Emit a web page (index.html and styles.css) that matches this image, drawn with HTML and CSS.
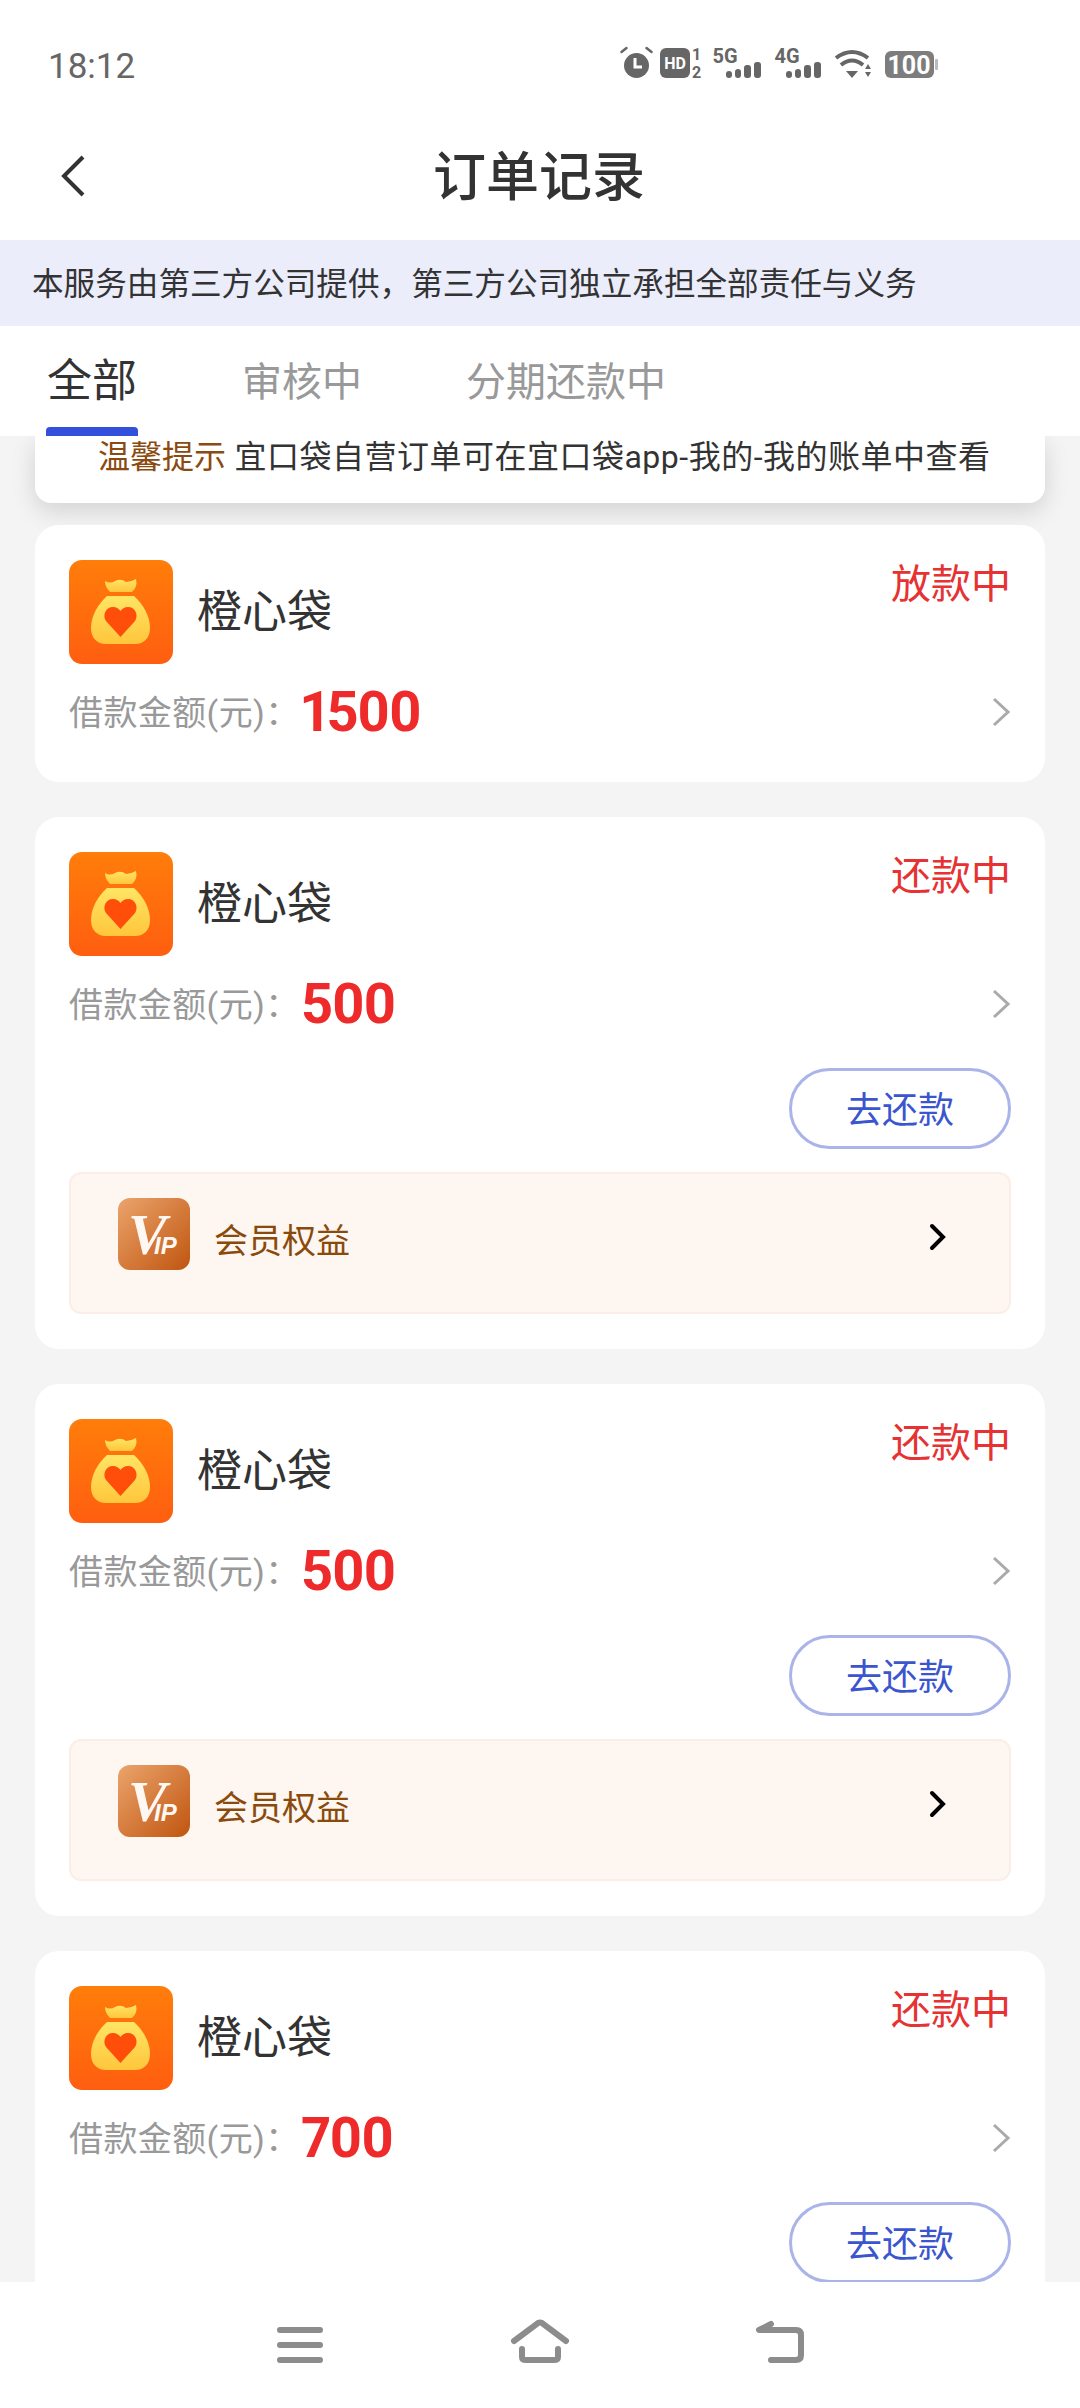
FILE: index.html
```html
<!DOCTYPE html>
<html lang="zh-CN">
<head>
    <meta charset="UTF-8">
    <meta name="viewport" content="width=device-width, initial-scale=1.0">
    <title>订单记录</title>
    <link rel="stylesheet" href="styles.css">
</head>
<body>
    <!-- shared icons -->
    <svg class="defs" width="0" height="0">
        <defs>
            <linearGradient id="logoBg" x1="0" y1="0" x2="0" y2="1">
                <stop offset="0" stop-color="#ff7d0a"/>
                <stop offset="1" stop-color="#ff5e10"/>
            </linearGradient>
            <linearGradient id="bagFill" x1="0" y1="0" x2="0" y2="1">
                <stop offset="0" stop-color="#ffe564"/>
                <stop offset="1" stop-color="#ffc63c"/>
            </linearGradient>
            <linearGradient id="vipBg" x1="0" y1="0" x2="1" y2="1">
                <stop offset="0" stop-color="#eba46c"/>
                <stop offset="1" stop-color="#c05510"/>
            </linearGradient>
            <symbol id="logo" viewBox="0 0 104 104">
                <rect width="104" height="104" rx="13" fill="url(#logoBg)"/>
                <path d="M36 21 Q41 24 46 21 Q52 18 57 22 Q62 22 67 19 Q69 27 63 32 H41 Q36 27 36 21Z" fill="url(#bagFill)"/>
                <path d="M38 36 H65 C74 44 81 56 81 68 C81 78 75 84 66 84 H37 C28 84 22 78 22 68 C22 56 29 44 38 36Z" fill="url(#bagFill)"/>
                <path d="M51.5 77 L37 61 C33 55 37 47 44 47 C47.5 47 50 49 51.5 51 C53 49 55.5 47 59 47 C66 47 70 55 66 61Z" fill="#ff4d0a"/>
            </symbol>
            <symbol id="vip" viewBox="0 0 72 72">
                <rect width="72" height="72" rx="12" fill="url(#vipBg)"/>
                <text x="10" y="56" class="vip-v">V</text>
                <text x="36" y="56" class="vip-ip">IP</text>
            </symbol>
        </defs>
    </svg>

    <div class="status-bar">
        <span class="time">18:12</span>
        <svg class="status-icons" viewBox="0 0 340 40" width="340" height="40">
            <path d="M3.5 7 L8.5 3 M28.5 3 L33.5 7" stroke="#666" stroke-width="2.5" stroke-linecap="round" fill="none"/>
            <circle cx="18.5" cy="20.5" r="12.5" fill="#666"/>
            <path d="M17 13 V22 H24" stroke="#fff" stroke-width="3" fill="none"/>
            <rect x="42" y="3" width="30" height="30" rx="6" fill="#666"/>
            <text x="57" y="24" class="ic-hd">HD</text>
            <text x="74" y="15" class="ic-sim">1</text>
            <text x="74" y="33" class="ic-sim">2</text>
            <text x="107" y="18" class="ic-net">5G</text>
            <rect x="108" y="26" width="6" height="7" rx="3" fill="#666"/>
            <rect x="117" y="24" width="6" height="9" rx="3" fill="#666"/>
            <rect x="126" y="20" width="7" height="13" rx="3" fill="#666"/>
            <rect x="136" y="17" width="7" height="16" rx="3" fill="#666"/>
            <text x="169" y="18" class="ic-net">4G</text>
            <rect x="168" y="26" width="6" height="7" rx="3" fill="#666"/>
            <rect x="177" y="24" width="6" height="9" rx="3" fill="#666"/>
            <rect x="186" y="20" width="7" height="13" rx="3" fill="#666"/>
            <rect x="196" y="17" width="7" height="16" rx="3" fill="#666"/>
            <path d="M218 13 Q234 1 250 13 M223 20 Q234 11 245 20" stroke="#666" stroke-width="4" fill="none"/>
            <path d="M228 26 H240 L234 33Z M247 24 H253 L250 19Z M247 27 H253 L250 32Z" fill="#666"/>
            <rect x="267" y="6" width="49" height="27" rx="6" fill="#7d7d7d"/>
            <rect x="317" y="14" width="3" height="11" rx="1" fill="#bbb"/>
            <text x="291" y="29" class="ic-batt">100</text>
        </svg>
    </div>

    <div class="nav-bar">
        <svg class="nav-back" viewBox="0 0 30 44" width="30" height="44">
            <path d="M25 3 L6 22 L25 41" fill="none" stroke="#333" stroke-width="4"/>
        </svg>
        <h1 class="nav-title">订单记录</h1>
    </div>

    <div class="notice">本服务由第三方公司提供，第三方公司独立承担全部责任与义务</div>

    <div class="tabs">
        <div class="tab active"><span>全部</span><i class="tab-line"></i></div>
        <div class="tab"><span>审核中</span></div>
        <div class="tab"><span>分期还款中</span></div>
    </div>

    <div class="list">
        <div class="tip"><b>温馨提示</b> 宜口袋自营订单可在宜口袋app-我的-我的账单中查看</div>

        <div class="card">
            <div class="card-head">
                <svg class="logo"><use href="#logo"/></svg>
                <span class="name">橙心袋</span>
                <span class="state">放款中</span>
            </div>
            <div class="amount-row">
                <span class="label">借款金额(元)：</span>
                <span class="amount">1500</span>
                <svg class="arrow" viewBox="0 0 20 30" width="20" height="30"><path d="M3 2 L17 15 L3 28" fill="none" stroke="#aaa" stroke-width="3"/></svg>
            </div>
        </div>

        <div class="card">
            <div class="card-head">
                <svg class="logo"><use href="#logo"/></svg>
                <span class="name">橙心袋</span>
                <span class="state">还款中</span>
            </div>
            <div class="amount-row">
                <span class="label">借款金额(元)：</span>
                <span class="amount">500</span>
                <svg class="arrow" viewBox="0 0 20 30" width="20" height="30"><path d="M3 2 L17 15 L3 28" fill="none" stroke="#aaa" stroke-width="3"/></svg>
            </div>
            <div class="actions"><span class="btn">去还款</span></div>
            <div class="vip-box">
                <svg class="vip-icon"><use href="#vip"/></svg>
                <span class="vip-text">会员权益</span>
                <svg class="vip-arrow" viewBox="0 0 18 28" width="18" height="28"><path d="M3 3 L14 14 L3 25" fill="none" stroke="#000" stroke-width="4" stroke-linecap="round"/></svg>
            </div>
        </div>

        <div class="card">
            <div class="card-head">
                <svg class="logo"><use href="#logo"/></svg>
                <span class="name">橙心袋</span>
                <span class="state">还款中</span>
            </div>
            <div class="amount-row">
                <span class="label">借款金额(元)：</span>
                <span class="amount">500</span>
                <svg class="arrow" viewBox="0 0 20 30" width="20" height="30"><path d="M3 2 L17 15 L3 28" fill="none" stroke="#aaa" stroke-width="3"/></svg>
            </div>
            <div class="actions"><span class="btn">去还款</span></div>
            <div class="vip-box">
                <svg class="vip-icon"><use href="#vip"/></svg>
                <span class="vip-text">会员权益</span>
                <svg class="vip-arrow" viewBox="0 0 18 28" width="18" height="28"><path d="M3 3 L14 14 L3 25" fill="none" stroke="#000" stroke-width="4" stroke-linecap="round"/></svg>
            </div>
        </div>

        <div class="card">
            <div class="card-head">
                <svg class="logo"><use href="#logo"/></svg>
                <span class="name">橙心袋</span>
                <span class="state">还款中</span>
            </div>
            <div class="amount-row">
                <span class="label">借款金额(元)：</span>
                <span class="amount">700</span>
                <svg class="arrow" viewBox="0 0 20 30" width="20" height="30"><path d="M3 2 L17 15 L3 28" fill="none" stroke="#aaa" stroke-width="3"/></svg>
            </div>
            <div class="actions"><span class="btn">去还款</span></div>
        </div>
    </div>

    <div class="sys-nav">
        <svg viewBox="0 0 60 60" width="60" height="60"><path d="M10 18 H50 M10 33 H50 M10 48 H50" fill="none" stroke="#8c8c8c" stroke-width="6" stroke-linecap="round"/></svg>
        <svg viewBox="0 0 60 60" width="60" height="60"><path d="M4 29 L28 11 Q30 10 32 11 L56 29 M12 37 V45 Q12 48 16 48 H44 Q48 48 48 45 V37" fill="none" stroke="#8c8c8c" stroke-width="6" stroke-linecap="round"/></svg>
        <svg viewBox="0 0 60 60" width="60" height="60"><path d="M21 12 L9 18 H46 Q51 18 51 23 V43 Q51 48 46 48 H21" fill="none" stroke="#8c8c8c" stroke-width="6" stroke-linecap="round" stroke-linejoin="round"/></svg>
    </div>
</body>
</html>
```

FILE: styles.css
```css
* {
    box-sizing: border-box;
}
body {
    margin: 0;
    width: 1080px;
    height: 2408px;
    display: flex;
    flex-direction: column;
    overflow: hidden;
    background: #fff;
    color: #333;
    font-family: Roboto, "Noto Sans CJK SC", sans-serif;
}
.defs {
    display: block;
    height: 0;
}
.vip-v {
    font: italic 700 58px "Liberation Serif", serif;
    fill: #fff8f2;
}
.vip-ip {
    font: italic 700 24px "Liberation Sans", sans-serif;
    fill: #fff8f2;
}

/* status bar */
.status-bar {
    height: 112px;
    padding: 18px 122px 0 48px;
    display: flex;
    justify-content: space-between;
    align-items: center;
}
.time {
    padding-top: 2px;
    font-size: 35px;
    color: #666;
}
.ic-hd {
    font: 700 16px Roboto, sans-serif;
    fill: #fff;
    text-anchor: middle;
}
.ic-sim {
    font: 700 16px Roboto, sans-serif;
    fill: #666;
}
.ic-net {
    font: 700 20px Roboto, sans-serif;
    fill: #666;
    text-anchor: middle;
}
.ic-batt {
    font: 700 25px Roboto, sans-serif;
    fill: #fff;
    text-anchor: middle;
}

/* title bar */
.nav-bar {
    height: 128px;
    padding-left: 58px;
    display: flex;
    align-items: center;
}
.nav-back {
    flex: none;
}
.nav-title {
    margin: 0 0 6px 345px;
    font-size: 53px;
    font-weight: 500;
    color: #333;
}

.notice {
    height: 86px;
    padding: 0 0 4px 32px;
    display: flex;
    align-items: center;
    background: #ebedfb;
    font-size: 31.6px;
    color: #333;
}

/* tabs */
.tabs {
    height: 110px;
    padding-left: 46px;
    display: flex;
    gap: 104px;
}
.tab {
    display: flex;
    flex-direction: column;
    align-items: center;
    padding-top: 27px;
    font-size: 40px;
    line-height: 60px;
    color: #999;
}
.tab.active {
    padding-top: 26px;
    font-size: 45px;
    color: #333;
}
.tab-line {
    display: block;
    width: 92px;
    height: 9px;
    margin-top: auto;
    border-radius: 4px 4px 0 0;
    background: #3350dc;
}

/* list */
.list {
    flex: 1;
    min-height: 0;
    overflow: hidden;
    padding: 0 35px;
    background: #f4f4f4;
}
.tip {
    height: 67px;
    padding-left: 63px;
    margin-bottom: 22px;
    background: #fff;
    border-radius: 0 0 16px 16px;
    box-shadow: 0 8px 24px rgba(0, 0, 0, 0.14);
    font-size: 32px;
    line-height: 42px;
    letter-spacing: 0.5px;
    color: #333;
    white-space: nowrap;
}
.tip b {
    font-weight: 400;
    letter-spacing: 0;
    color: #8a4a10;
}
.card {
    padding: 35px 34px;
    margin-bottom: 35px;
    background: #fff;
    border-radius: 24px;
}
.card-head {
    height: 104px;
    display: flex;
    align-items: flex-start;
}
.logo {
    width: 104px;
    height: 104px;
    flex: none;
}
.name {
    margin-left: 24px;
    font-size: 45px;
    line-height: 106px;
    color: #333;
}
.state {
    margin-left: auto;
    font-size: 40px;
    line-height: 50px;
    color: #e63232;
}
.amount-row {
    height: 60px;
    margin-top: 18px;
    margin-bottom: 5px;
    display: flex;
    align-items: center;
}
.label {
    width: 232px;
    flex: none;
    padding-bottom: 4px;
    font-size: 34px;
    letter-spacing: 0.4px;
    color: #999;
    white-space: nowrap;
}
.amount {
    font-size: 56px;
    font-weight: 700;
    font-variant-numeric: proportional-nums;
    color: #ee2a2a;
    letter-spacing: -1.5px;
}
.arrow {
    margin-left: auto;
}
.actions {
    margin-top: 34px;
    display: flex;
    justify-content: flex-end;
}
.btn {
    width: 222px;
    height: 81px;
    padding-bottom: 4px;
    display: flex;
    align-items: center;
    justify-content: center;
    border: 3px solid #aab4e8;
    border-radius: 41px;
    font-size: 36px;
    color: #3b55cf;
}
.vip-box {
    height: 142px;
    margin-top: 23px;
    padding: 0 62px 0 47px;
    display: flex;
    align-items: center;
    background: #fdf6f1;
    border: 2px solid #fbeee6;
    border-radius: 12px;
}
.vip-icon {
    width: 72px;
    height: 72px;
    flex: none;
    margin-top: -18px;
}
.vip-text {
    margin-left: 24px;
    padding-bottom: 10px;
    font-size: 34px;
    color: #8a4a0c;
}
.vip-arrow {
    margin: -12px 0 0 auto;
}

/* system nav */
.sys-nav {
    height: 126px;
    flex: none;
    padding-bottom: 6px;
    display: flex;
    justify-content: center;
    align-items: center;
    gap: 180px;
    background: #fff;
}
```
